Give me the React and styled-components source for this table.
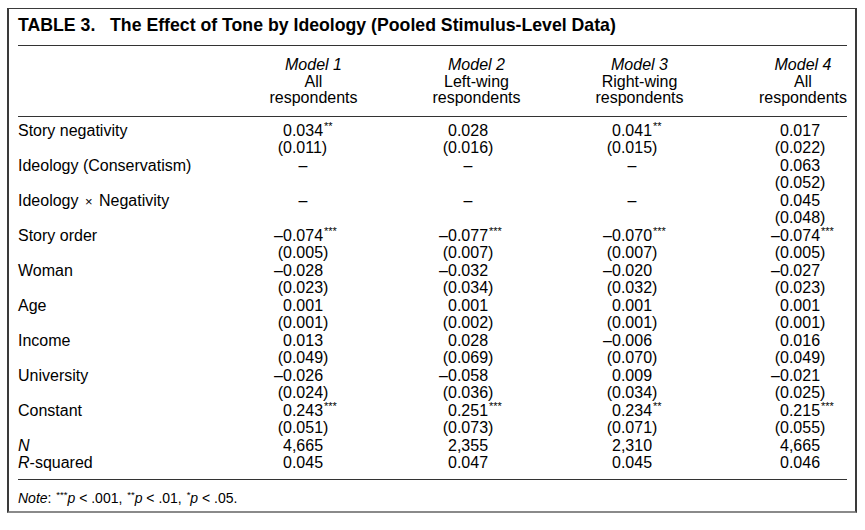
import React from "react";
import styled, { createGlobalStyle } from "styled-components";

const GlobalStyle = createGlobalStyle`
  body {
    margin: 0;
    background: #ffffff;
    font-family: "Liberation Sans", Arial, sans-serif;
    color: #000;
  }
`;

const COLS = "214px 163px 163px 163px 126px";

const Frame = styled.div`
  box-sizing: border-box;
  margin: 8px 0 0 7px;
  width: 850px;
  height: 505px;
  border: 2px solid #3a3a3a;
  border-top-width: 1px;
  border-bottom: 2px solid #8a8a8a;
  padding: 6px 8px 0 9px;
`;

const Title = styled.h1`
  margin: 0;
  padding-bottom: 9px;
  font-size: 17.7px;
  line-height: 21px;
  font-weight: bold;
  border-bottom: 1px solid #333;
  white-space: pre;
`;

const Head = styled.div`
  display: grid;
  grid-template-columns: ${COLS};
  padding: 11px 0 9px;
  border-bottom: 1px solid #333;
`;

const HeadCell = styled.div`
  justify-self: ${(p) => (p.$end ? "end" : "center")};
  text-align: center;
  font-size: 16px;
  line-height: 16.5px;
`;

const ModelName = styled.div`
  font-style: italic;
`;

const Body = styled.div`
  display: grid;
  grid-template-columns: ${COLS};
  grid-auto-rows: 17.5px;
  padding: 5px 0 7px;
  border-bottom: 1px solid #333;
  font-size: 16px;
  line-height: 17.5px;
`;

const Label = styled.div`
  white-space: nowrap;
`;

const Em = styled.i``;

const Times = styled.span`
  font-size: 13px;
  padding: 0 2px;
`;

const Cell = styled.div`
  padding-left: ${(p) => p.$anchor - 9}px;
  white-space: nowrap;
`;

const Pre = styled.span`
  display: inline-block;
  width: 9px;
  text-align: right;
`;

const Dash = styled.span`
  display: inline-block;
  width: 40px;
  text-align: center;
`;

const Stars = styled.sup`
  font-size: 11px;
  line-height: 0;
  vertical-align: 6px;
  margin-left: 1px;
`;

const Note = styled.div`
  padding-top: 10px;
  font-size: 14px;
  line-height: 17px;
`;

const NoteStars = styled.sup`
  font-size: 9.5px;
  line-height: 0;
  vertical-align: 5px;
  margin-left: 1px;
`;

const anchors = [51, 53, 54, 59];

const models = [
  ["Model 1", "All", "respondents"],
  ["Model 2", "Left-wing", "respondents"],
  ["Model 3", "Right-wing", "respondents"],
  ["Model 4", "All", "respondents"],
];

// value strings: "-" missing, leading "–" negative, trailing * stars
const rows = [
  { label: "Story negativity", coef: ["0.034**", "0.028", "0.041**", "0.017"], se: ["0.011", "0.016", "0.015", "0.022"] },
  { label: "Ideology (Conservatism)", coef: ["-", "-", "-", "0.063"], se: [null, null, null, "0.052"] },
  { label: "ix", coef: ["-", "-", "-", "0.045"], se: [null, null, null, "0.048"] },
  { label: "Story order", coef: ["–0.074***", "–0.077***", "–0.070***", "–0.074***"], se: ["0.005", "0.007", "0.007", "0.005"] },
  { label: "Woman", coef: ["–0.028", "–0.032", "–0.020", "–0.027"], se: ["0.023", "0.034", "0.032", "0.023"] },
  { label: "Age", coef: ["0.001", "0.001", "0.001", "0.001"], se: ["0.001", "0.002", "0.001", "0.001"] },
  { label: "Income", coef: ["0.013", "0.028", "–0.006", "0.016"], se: ["0.049", "0.069", "0.070", "0.049"] },
  { label: "University", coef: ["–0.026", "–0.058", "0.009", "–0.021"], se: ["0.024", "0.036", "0.034", "0.025"] },
  { label: "Constant", coef: ["0.243***", "0.251***", "0.234**", "0.215***"], se: ["0.051", "0.073", "0.071", "0.055"] },
];

const stats = [
  { label: "N", values: ["4,665", "2,355", "2,310", "4,665"] },
  { label: "R", values: ["0.045", "0.047", "0.045", "0.046"] },
];

const Coef = ({ value, anchor }) => {
  if (value === "-") {
    return (
      <Cell $anchor={anchor}>
        <Pre />
        <Dash>–</Dash>
      </Cell>
    );
  }
  const neg = value.startsWith("–");
  const body = value.replace("–", "");
  const stars = body.match(/\*+$/);
  const num = body.replace(/\*+$/, "");
  return (
    <Cell $anchor={anchor}>
      <Pre>{neg ? "–" : ""}</Pre>
      {num}
      {stars && <Stars>{stars[0]}</Stars>}
    </Cell>
  );
};

const Se = ({ value, anchor }) => (
  <Cell $anchor={anchor}>
    {value && (
      <>
        <Pre>(</Pre>
        {value})
      </>
    )}
  </Cell>
);

const labelText = (label) => {
  if (label === "ix") {
    return (
      <>
        Ideology <Times>×</Times> Negativity
      </>
    );
  }
  return label;
};

const App = () => {
  return (
    <>
      <GlobalStyle />
      <Frame>
        <Title>{"TABLE 3.   The Effect of Tone by Ideology (Pooled Stimulus-Level Data)"}</Title>
        <Head>
          <div />
          {models.map((m, i) => (
            <HeadCell key={i} $end={i === 3}>
              <ModelName>{m[0]}</ModelName>
              <div>{m[1]}</div>
              <div>{m[2]}</div>
            </HeadCell>
          ))}
        </Head>
        <Body>
          {rows.map((r) => (
            <React.Fragment key={r.label}>
              <Label>{labelText(r.label)}</Label>
              {r.coef.map((v, i) => (
                <Coef key={i} value={v} anchor={anchors[i]} />
              ))}
              <Label />
              {r.se.map((v, i) => (
                <Se key={i} value={v} anchor={anchors[i]} />
              ))}
            </React.Fragment>
          ))}
          {stats.map((s) => (
            <React.Fragment key={s.label}>
              <Label>
                {s.label === "N" ? <Em>N</Em> : (
                  <>
                    <Em>R</Em>-squared
                  </>
                )}
              </Label>
              {s.values.map((v, i) => (
                <Coef key={i} value={v} anchor={anchors[i]} />
              ))}
            </React.Fragment>
          ))}
        </Body>
        <Note>
          <Em>Note</Em>: <NoteStars>***</NoteStars>
          <Em>p</Em> &lt; .001, <NoteStars>**</NoteStars>
          <Em>p</Em> &lt; .01, <NoteStars>*</NoteStars>
          <Em>p</Em> &lt; .05.
        </Note>
      </Frame>
    </>
  );
};

export default App;
